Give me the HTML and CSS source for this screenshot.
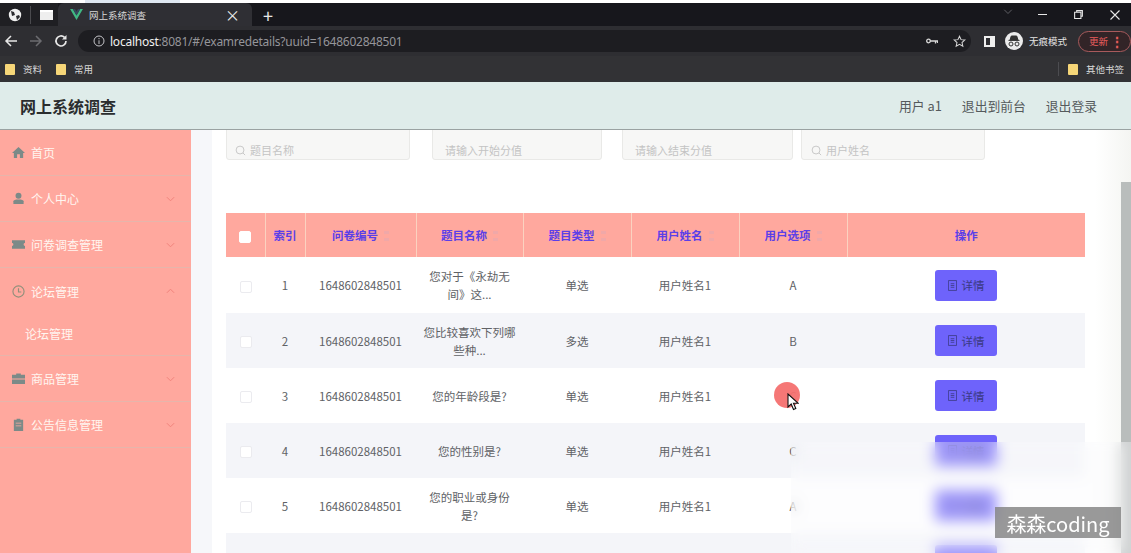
FILE: index.html
```html
<!DOCTYPE html>
<html lang="zh-CN">
<head>
<meta charset="utf-8">
<title>网上系统调查</title>
<link rel="stylesheet" href="styles.css">
</head>
<body>
<div class="frame">
  <div class="top-strip"><span class="strip-patch"></span></div>
  <div class="tabbar">
    <div class="tab-tools">
      <svg class="ic globe" viewBox="0 0 14 14"><circle cx="7" cy="7" r="6.2" fill="#f0f0f0"/><path d="M3 3l3 1 1 3-3 1zM8 8l3-1 1 2-3 3z" fill="#2a2a2e"/></svg>
      <span class="tool-sep"></span>
      <span class="win-icon"></span>
    </div>
    <div class="tab">
      <svg class="ic vue" viewBox="0 0 14 12"><path d="M0 0h3l4 7 4-7h3L7 12z" fill="#41b883"/><path d="M3 0h2.4L7 3l1.6-3H11L7 7z" fill="#35495e"/></svg>
      <span class="tab-title">网上系统调查</span>
      <span class="tab-x">×</span>
    </div>
    <span class="tab-plus">+</span>
    <div class="win-controls">
      <svg class="ic wc-chev" viewBox="0 0 12 8"><path d="M1 1l5 5 5-5" fill="none" stroke="#77777c" stroke-width="1"/></svg>
      <span class="wc-min"></span>
      <svg class="ic wc-max" viewBox="0 0 10 10"><path d="M3 2V.7h6.3V7H8M.7 2.5h7v7h-7z" fill="none" stroke="#e8e8e8" stroke-width="1.2"/></svg>
      <svg class="ic wc-close" viewBox="0 0 10 10"><path d="M.5.5l9 9M9.500.5l-9 9" stroke="#e8e8e8" stroke-width="1.1"/></svg>
    </div>
  </div>
  <div class="toolbar">
    <svg class="ic nav" viewBox="0 0 14 14"><path d="M13 7H2M7 2L2 7l5 5" fill="none" stroke="#e8e8e8" stroke-width="1.5"/></svg>
    <svg class="ic nav" viewBox="0 0 14 14"><path d="M1 7h11M7 2l5 5-5 5" fill="none" stroke="#6c6c70" stroke-width="1.5"/></svg>
    <svg class="ic nav" viewBox="0 0 14 14"><path d="M12 7a5 5 0 1 1-1.500-3.600" fill="none" stroke="#e8e8e8" stroke-width="1.700"/><path d="M12.500 1v4.500H8z" fill="#e8e8e8"/></svg>
    <div class="omnibox">
      <svg class="ic info" viewBox="0 0 12 12"><circle cx="6" cy="6" r="5" fill="none" stroke="#c4c4c8"/><path d="M6 5.300V9M6 3v1.200" stroke="#c4c4c8"/></svg>
      <span class="url"><span class="url-host">localhost</span>:8081/#/examredetails?uuid=1648602848501</span>
      <svg class="ic key" viewBox="0 0 12 6"><circle cx="2.500" cy="3" r="1.800" fill="none" stroke="#d8d8d8" stroke-width="1.300"/><path d="M4 3h8M9.500 3v2.500M11.500 3v2" stroke="#d8d8d8" stroke-width="1.300"/></svg>
      <svg class="ic star" viewBox="0 0 14 14"><path d="M7 1.300l1.700 3.700 4 .4-3 2.700.9 4L7 10.100 3.400 12.100l.9-4-3-2.700 4-.4z" fill="none" stroke="#d8d8d8" stroke-width="1.100"/></svg>
    </div>
    <span class="split-icon"></span>
    <div class="incognito">
      <svg class="ic incog-face" viewBox="0 0 18 18"><circle cx="9" cy="9" r="9" fill="#ececec"/><path d="M5 8l1.300-4h5.400L13 8zM3.500 8.400h11" fill="#333" stroke="#333"/><circle cx="6" cy="12" r="2" fill="none" stroke="#333"/><circle cx="12" cy="12" r="2" fill="none" stroke="#333"/></svg>
      <span class="incog-label">无痕模式</span>
    </div>
    <div class="update"><span class="update-label">更新</span><span class="update-dots">⋮</span></div>
  </div>
  <div class="bookmarks">
    <span class="folder"></span><span class="bm">资料</span>
    <span class="folder"></span><span class="bm">常用</span>
    <span class="bm-sep"></span>
    <span class="folder"></span><span class="bm bm-last">其他书签</span>
  </div>

  <header class="app-head">
    <h1 class="app-title">网上系统调查</h1>
    <nav class="app-nav"><span>用户 a1</span><span>退出到前台</span><span>退出登录</span></nav>
  </header>

  <div class="app-body">
    <aside class="side">
      <div class="mi">
        <svg class="mi-ic" viewBox="0 0 14 14"><path d="M7 1L0 7.500h2V13h3.500V9h3v4H12V7.500h2z"/></svg>
        <span>首页</span>
      </div>
      <div class="mi">
        <svg class="mi-ic" viewBox="0 0 14 14"><circle cx="7" cy="4" r="3.200"/><path d="M1.500 13V10c0-1.500 2-2 5.500-2s5.500.5 5.500 2v3z"/></svg>
        <span>个人中心</span>
        <svg class="mi-arrow" viewBox="0 0 10 6"><path d="M1 1l4 4 4-4"/></svg>
      </div>
      <div class="mi">
        <svg class="mi-ic" viewBox="0 0 14 14"><path d="M0 2.500h14v3a1.500 1.500 0 0 0 0 3v3H0v-3a1.500 1.500 0 0 0 0-3z"/></svg>
        <span>问卷调查管理</span>
        <svg class="mi-arrow" viewBox="0 0 10 6"><path d="M1 1l4 4 4-4"/></svg>
      </div>
      <div class="mi mi-open">
        <svg class="mi-ic mi-clock" viewBox="0 0 14 14"><circle cx="7" cy="7" r="6"/><path d="M7 3.500V7.500h3"/></svg>
        <span>论坛管理</span>
        <svg class="mi-arrow" viewBox="0 0 10 6"><path d="M1 5l4-4 4 4"/></svg>
      </div>
      <div class="mi-sub">论坛管理</div>
      <div class="mi">
        <svg class="mi-ic" viewBox="0 0 14 14"><path d="M4.500 3V1.500h5V3H14v4H0V3zM0 8h14v5H0z"/></svg>
        <span>商品管理</span>
        <svg class="mi-arrow" viewBox="0 0 10 6"><path d="M1 1l4 4 4-4"/></svg>
      </div>
      <div class="mi">
        <svg class="mi-ic" viewBox="0 0 14 14"><path d="M2 2h3V.8h4V2h3v12H2zM4 5v1h6V5zM4 8v1h6V8z"/></svg>
        <span>公告信息管理</span>
        <svg class="mi-arrow" viewBox="0 0 10 6"><path d="M1 1l4 4 4-4"/></svg>
      </div>
    </aside>

    <main class="main">
      <div class="content">
        <div class="filters">
          <div class="field f-name"><svg class="search" viewBox="0 0 12 12"><circle cx="5.500" cy="5.500" r="4.300"/><path d="M8.700 8.700L11 11"/></svg>题目名称</div>
          <div class="field f-start">请输入开始分值</div>
          <div class="field f-end">请输入结束分值</div>
          <div class="field f-user"><svg class="search" viewBox="0 0 12 12"><circle cx="5.500" cy="5.500" r="4.300"/><path d="M8.700 8.700L11 11"/></svg>用户姓名</div>
        </div>
        <table class="grid">
          <colgroup>
            <col class="c1"><col class="c2"><col class="c3"><col class="c4"><col class="c5"><col class="c6"><col class="c7"><col class="c8">
          </colgroup>
          <thead>
            <tr>
              <th><span class="cb cb-head"></span></th>
              <th>索引</th>
              <th>问卷编号<i class="sort"></i></th>
              <th>题目名称<i class="sort"></i></th>
              <th>题目类型<i class="sort"></i></th>
              <th>用户姓名<i class="sort"></i></th>
              <th>用户选项<i class="sort"></i></th>
              <th>操作</th>
            </tr>
          </thead>
          <tbody>
            <tr class="first">
              <td><span class="cb"></span></td><td>1</td><td>1648602848501</td>
              <td>您对于《永劫无<br>间》这...</td><td>单选</td><td>用户姓名1</td><td>A</td>
              <td><button class="btn"><svg class="btn-ic" viewBox="0 0 10 12"><path d="M.5.500h9v11h-9zM3 4h4M3 6h4M3 8h4"/></svg>详情</button></td>
            </tr>
            <tr>
              <td><span class="cb"></span></td><td>2</td><td>1648602848501</td>
              <td>您比较喜欢下列哪<br>些种...</td><td>多选</td><td>用户姓名1</td><td>B</td>
              <td><button class="btn"><svg class="btn-ic" viewBox="0 0 10 12"><path d="M.5.500h9v11h-9zM3 4h4M3 6h4M3 8h4"/></svg>详情</button></td>
            </tr>
            <tr>
              <td><span class="cb"></span></td><td>3</td><td>1648602848501</td>
              <td>您的年龄段是?</td><td>单选</td><td>用户姓名1</td><td>C</td>
              <td><button class="btn"><svg class="btn-ic" viewBox="0 0 10 12"><path d="M.5.500h9v11h-9zM3 4h4M3 6h4M3 8h4"/></svg>详情</button></td>
            </tr>
            <tr>
              <td><span class="cb"></span></td><td>4</td><td>1648602848501</td>
              <td>您的性别是?</td><td>单选</td><td>用户姓名1</td><td>C</td>
              <td><button class="btn"><svg class="btn-ic" viewBox="0 0 10 12"><path d="M.5.500h9v11h-9zM3 4h4M3 6h4M3 8h4"/></svg>详情</button></td>
            </tr>
            <tr>
              <td><span class="cb"></span></td><td>5</td><td>1648602848501</td>
              <td>您的职业或身份<br>是?</td><td>单选</td><td>用户姓名1</td><td>A</td>
              <td><button class="btn"><svg class="btn-ic" viewBox="0 0 10 12"><path d="M.5.500h9v11h-9zM3 4h4M3 6h4M3 8h4"/></svg>详情</button></td>
            </tr>
            <tr>
              <td><span class="cb"></span></td><td>6</td><td>1648602848501</td>
              <td></td><td>单选</td><td>用户姓名1</td><td>A</td>
              <td><button class="btn"><svg class="btn-ic" viewBox="0 0 10 12"><path d="M.5.500h9v11h-9zM3 4h4M3 6h4M3 8h4"/></svg>详情</button></td>
            </tr>
          </tbody>
        </table>
      </div>
      <div class="scroll"><span class="thumb"></span></div>
    </main>
  </div>

  <span class="click-dot"></span>
  <svg class="cursor" viewBox="0 0 12 18"><path d="M1 1v13l3.200-3 2.300 5.500 2.300-1-2.300-5.300H11z" fill="#fff" stroke="#111" stroke-width="1.100"/></svg>
  <div class="blur-patch"></div>
  <div class="watermark">森森coding</div>
</div>
</body>
</html>
```
FILE: styles.css
```css
* { box-sizing: border-box; }
html, body { margin: 0; padding: 0; height: 100%; overflow: hidden; background: #fff; }
body { font-family: "Noto Sans CJK SC", "Noto Sans", sans-serif; font-size: 12px; }
.frame { position: relative; width: 1131px; height: 553px; overflow: hidden; display: flex; flex-direction: column; }
.ic { display: block; flex: none; }

/* browser chrome */
.top-strip { height: 3px; background: #fff; display: flex; }
.strip-patch { width: 95px; margin-left: 85px; background: #dfe8f2; }
.tabbar { height: 23px; background: #17171c; display: flex; align-items: center; color: #e8e8e8; }
.tab-tools { width: 58px; height: 23px; display: flex; align-items: center; padding-left: 8px; background: #1f1f23; }
.globe { width: 14px; height: 14px; }
.tool-sep { width: 1px; height: 18px; background: #4a4a4e; margin: 0 9px 0 8px; }
.win-icon { width: 13px; height: 10px; background: #eeeeee; border-top: 2px solid #fff; }
.tab { width: 194px; height: 23px; background: #2f2f34; border-radius: 6px 6px 0 0; display: flex; align-items: center; padding-left: 12px; }
.vue { width: 13px; height: 11px; margin-right: 6px; }
.tab-title { font-size: 9.500px; color: #d8d8d8; flex: 1; white-space: nowrap; }
.tab-x { font-size: 15px; line-height: 1; color: #eee; margin-right: 12px; }
.tab-plus { font-size: 18px; line-height: 1; margin-left: 11px; color: #e6e6e6; }
.win-controls { margin-left: auto; display: flex; align-items: center; padding-right: 11px; }
.wc-chev { width: 10px; height: 6px; margin-top: -6px; }
.wc-min { width: 9px; height: 1px; background: #e8e8e8; margin: 0 27px 0 25px; }
.wc-max { width: 9px; height: 9px; margin-right: 27px; }
.wc-close { width: 10px; height: 10px; }

.toolbar { height: 30px; background: #2e2e32; display: flex; align-items: center; padding-left: 4px; color: #e8e8e8; }
.nav { width: 14px; height: 14px; margin-right: 11px; }
.omnibox { width: 896px; height: 22px; margin-left: -1px; background: #1d1d21; border-radius: 11px; display: flex; align-items: center; padding-left: 15px; }
.info { width: 12px; height: 12px; margin-right: 5px; }
.url { font-family: "Noto Sans", sans-serif; font-size: 12px; color: #95959a; white-space: nowrap; letter-spacing: -.02em; }
.url-host { color: #f0f0f0; }
.key { width: 12px; height: 6px; margin-left: auto; margin-right: 15px; }
.star { width: 13px; height: 13px; margin-right: 5px; }
.split-icon { width: 11px; height: 11px; border: 2px solid #efefef; border-right-width: 5px; margin-left: 13px; }
.incognito { display: flex; align-items: center; height: 22px; margin-left: 10px; }
.incog-face { width: 18px; height: 18px; }
.incog-label { font-size: 9.500px; color: #e4e4e4; margin-left: 6px; white-space: nowrap; }
.update { width: 53px; height: 21px; margin-left: 11px; border: 1px solid #a85a5c; border-radius: 11px; display: flex; align-items: center; justify-content: space-between; padding: 0 6px 0 10px; color: #e85d5d; background: #322427; }
.update-label { font-size: 9.500px; }
.update-dots { font-size: 14px; line-height: 1; font-weight: bold; }

.bookmarks { height: 26px; background: #323235; display: flex; align-items: center; padding-left: 5px; color: #d8d8d8; }
.folder { width: 10px; height: 11px; background: #f6d678; border-radius: 1px; }
.bm { font-size: 9.500px; margin: 0 14px 0 8px; white-space: nowrap; }
.bm-sep { width: 1px; height: 14px; background: #4c4c50; margin-left: auto; margin-right: 9px; }
.bm-last { margin-right: 7px; }

/* app header */
.app-head { height: 48px; background: #dfecea; display: flex; align-items: center; justify-content: space-between; padding: 0 34px 0 20px; flex: none; border-bottom: 1px solid #9aa2a2; }
.app-title { margin: 0; font-size: 16px; font-weight: 700; color: #2a2d2e; }
.app-nav { display: flex; gap: 20px; font-size: 12.800px; color: #555a5c; }

/* app body */
.app-body { flex: 1; min-height: 0; display: flex; overflow: hidden; }
.side { width: 191px; background: #ffa89e; flex: none; color: #fff6f0; }
.mi { height: 46px; display: flex; align-items: center; padding-left: 12px; border-bottom: 1px solid #e6b5ab; }
.mi-open { border-bottom: 0; }
.mi-ic { width: 13px; height: 13px; fill: #7c8a88; margin-right: 6px; flex: none; }
.mi-clock { fill: none; stroke: #8f8f7a; stroke-width: 1.200; }
.mi-arrow { width: 9px; height: 6px; margin-left: auto; margin-right: 16px; fill: none; stroke: #ee7f78; stroke-width: 1; }
.mi-sub { height: 42px; line-height: 40px; padding-left: 25px; border-bottom: 1px solid #e6b5ab; }

.main { flex: 1; min-width: 0; display: flex; background: #f6f7fa; overflow: hidden; }
.content { width: 883px; margin-left: 21px; background: #fff; padding: 0 10px 0 14px; flex: none; }
.filters { display: flex; margin-top: -10px; }
.field { height: 40px; background: #f7f7f6; border: 1px solid #e9e9e7; border-radius: 3px; display: flex; align-items: center; padding: 20px 0 0 12px; color: #c4c4c4; font-size: 11px; white-space: nowrap; }
.f-name { width: 184px; margin-right: 22px; padding-left: 8px; }
.f-start { width: 170px; margin-right: 20px; }
.f-end { width: 171px; margin-right: 8px; }
.f-user { width: 184px; padding-left: 9px; }
.search { width: 11px; height: 11px; margin-right: 4px; fill: none; stroke: #c4c4c4; }

.grid { width: 859px; margin-top: 53px; table-layout: fixed; border-collapse: collapse; }
.c1 { width: 39px; } .c2 { width: 40px; } .c3 { width: 111px; } .c4 { width: 107px; }
.c5, .c6, .c7 { width: 108px; } .c8 { width: 238px; }
.grid th { height: 44px; background: #ffa89e; color: #5b3fe8; font-size: 11.500px; font-weight: 700; text-align: center; padding: 0; border-right: 1px solid #fbd2c0; }
.grid th:last-child { border-right: 0; }
.grid td { height: 55px; padding: 0; text-align: center; color: #606266; font-size: 11.500px; line-height: 18px; overflow: hidden; }
.grid tbody tr.first td { height: 56px; }
.grid tbody tr:nth-child(even) td { background: #f4f5f9; }
.sort { display: inline-block; width: 5px; height: 10px; margin-left: 6px; vertical-align: -1px; border-top: 3px solid #f0a8a8; border-bottom: 3px solid #f0a8a8; }
.cb { display: inline-block; width: 12px; height: 12px; background: #fff; border: 1px solid #ebebef; border-radius: 2px; vertical-align: middle; }
.cb-head { border-color: #fff; }
.btn { width: 62px; height: 31px; border: 0; border-radius: 3px; background: #6e63fb; color: #3b3a86; font: inherit; font-size: 11.500px; display: inline-flex; align-items: center; justify-content: center; padding: 0; vertical-align: middle; }
.btn-ic { width: 9px; height: 11px; margin-right: 5px; fill: none; stroke: #3b3a86; stroke-width: .9; }

.scroll { flex: 1; display: flex; justify-content: flex-end; background: linear-gradient(90deg, #fff, #f4f5f2); }
.thumb { width: 10px; margin-top: 52px; background: #b9bdbc; }

/* overlays */
.click-dot { position: absolute; left: 774px; top: 382px; width: 26px; height: 26px; border-radius: 50%; background: #f4706f; opacity: .95; }
.cursor { position: absolute; left: 787px; top: 393px; width: 12px; height: 18px; }
.blur-patch { position: absolute; left: 791px; top: 442px; right: 0; bottom: 0; backdrop-filter: blur(7px); background: rgba(250, 249, 251, .35); }
.watermark { position: absolute; left: 995px; top: 507px; width: 126px; height: 31px; background: rgba(130, 130, 130, .82); color: #fff; font-size: 20px; line-height: 33px; text-align: center; white-space: nowrap; overflow: hidden; }
```
